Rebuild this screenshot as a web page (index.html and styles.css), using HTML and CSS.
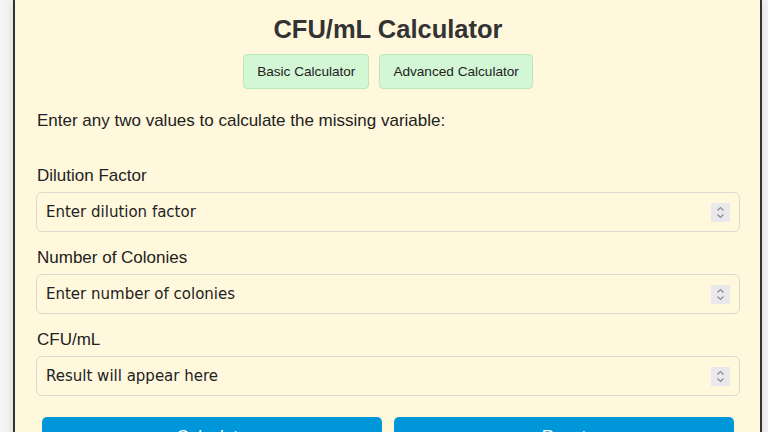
FILE: index.html
```html
<!DOCTYPE html>
<html lang="en">
<head>
<meta charset="utf-8">
<title>CFU/mL Calculator</title>
<link rel="stylesheet" href="styles.css">
</head>
<body>
<div class="container">
  <h1 class="title">CFU/mL Calculator</h1>
  <div class="tabs">
    <button class="tab">Basic Calculator</button>
    <button class="tab">Advanced Calculator</button>
  </div>
  <p class="intro">Enter any two values to calculate the missing variable:</p>
  <div class="field">
    <label class="label">Dilution Factor</label>
    <div class="box">
      <input class="input" type="text" placeholder="Enter dilution factor">
      <span class="spin"><svg width="19" height="19" viewBox="0 0 19 19"><path d="M6.5 7.5 L9.5 4.5 L12.5 7.5 M6.5 11.5 L9.5 14.5 L12.5 11.5" fill="none" stroke="#8a8a8e" stroke-width="1.2"/></svg></span>
    </div>
  </div>
  <div class="field">
    <label class="label">Number of Colonies</label>
    <div class="box">
      <input class="input" type="text" placeholder="Enter number of colonies">
      <span class="spin"><svg width="19" height="19" viewBox="0 0 19 19"><path d="M6.5 7.5 L9.5 4.5 L12.5 7.5 M6.5 11.5 L9.5 14.5 L12.5 11.5" fill="none" stroke="#8a8a8e" stroke-width="1.2"/></svg></span>
    </div>
  </div>
  <div class="field">
    <label class="label">CFU/mL</label>
    <div class="box">
      <input class="input" type="text" placeholder="Result will appear here" readonly>
      <span class="spin"><svg width="19" height="19" viewBox="0 0 19 19"><path d="M6.5 7.5 L9.5 4.5 L12.5 7.5 M6.5 11.5 L9.5 14.5 L12.5 11.5" fill="none" stroke="#8a8a8e" stroke-width="1.2"/></svg></span>
    </div>
  </div>
  <div class="actions">
    <button class="action">Calculate</button>
    <button class="action">Reset</button>
  </div>
</div>
</body>
</html>
```

FILE: styles.css
```css
html, body {
  margin: 0;
  padding: 0;
  background: #f4f4f4;
  font-family: "Liberation Sans", Arial, sans-serif;
  font-size: 17px;
  color: #222;
  overflow: hidden;
}
.container {
  box-sizing: border-box;
  width: 749px;
  margin-left: 13px;
  background: #fff8dc;
  border: 2px solid #333;
  border-top: none;
  padding: 15px 20px 20px 21px;
  box-shadow: 0 0 10px rgba(0, 0, 0, 0.12);
}
.title {
  margin: 0;
  text-align: center;
  font-size: 25.5px;
  line-height: 29px;
  font-weight: bold;
  color: #333;
}
.tabs {
  display: flex;
  justify-content: center;
  gap: 10px;
  margin-top: 10px;
}
.tab {
  box-sizing: border-box;
  height: 35px;
  padding: 0 13px;
  background: #d3f6d4;
  border: 1px solid #b9e8bd;
  border-radius: 4px;
  font-family: "Liberation Sans", Arial, sans-serif;
  font-size: 13.6px;
  color: #222;
}
.intro {
  margin: 22px 0 0 1px;
  line-height: 20px;
}
.field {
  margin-top: 35px;
}
.field + .field {
  margin-top: 16px;
}
.label {
  display: block;
  line-height: 20px;
  margin-left: 1px;
}
.box {
  box-sizing: border-box;
  display: flex;
  align-items: center;
  height: 40px;
  margin-top: 6px;
  border: 1px solid #dcdad0;
  border-radius: 6px;
  padding: 0 9px 0 0;
}
.input {
  flex: 1;
  min-width: 0;
  border: none;
  outline: none;
  background: transparent;
  padding: 0 0 0 9px;
  font-family: "DejaVu Sans", Verdana, sans-serif;
  font-size: 15px;
  color: #222;
}
.input::placeholder {
  color: #222;
  opacity: 1;
}
.spin {
  display: block;
  width: 19px;
  height: 19px;
  background: #e9e8ea;
}
.spin svg {
  display: block;
}
.actions {
  display: flex;
  gap: 12px;
  padding: 0 6px;
  margin-top: 21px;
}
.action {
  flex: 1;
  box-sizing: border-box;
  padding: 10px 0 11px;
  line-height: 19px;
  border: none;
  border-radius: 5px;
  background: #0096da;
  color: #fff;
  font-family: "Liberation Sans", Arial, sans-serif;
  font-size: 17px;
}
```
